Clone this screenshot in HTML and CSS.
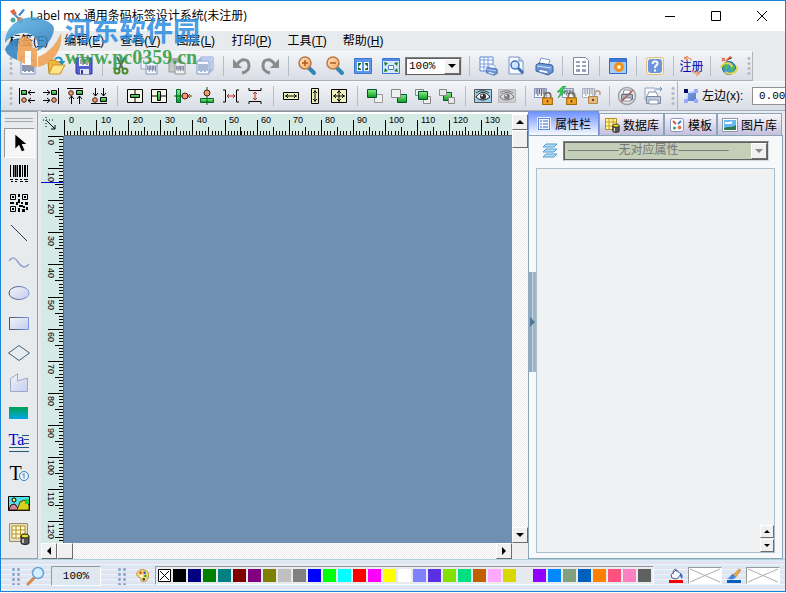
FILE: index.html
```
<!DOCTYPE html>
<html lang="zh-CN">
<head>
<meta charset="utf-8">
<title>Label mx</title>
<link rel="stylesheet" href="styles.css">
</head>
<body>
<svg class="sprite" aria-hidden="true">
  <defs>
    <linearGradient id="gGreen" x1="0" y1="0" x2="0" y2="1"><stop offset="0" stop-color="#8af08a"/><stop offset="1" stop-color="#0a9a1a"/></linearGradient>
    <linearGradient id="gBlue" x1="0" y1="0" x2="1" y2="1"><stop offset="0" stop-color="#eef5ff"/><stop offset="1" stop-color="#6f9be0"/></linearGradient>
    <linearGradient id="gLens" x1="0" y1="0" x2="1" y2="1"><stop offset="0" stop-color="#ffe6c8"/><stop offset="1" stop-color="#f7a860"/></linearGradient>
    <linearGradient id="gLine" x1="0" y1="0" x2="1" y2="0"><stop offset="0" stop-color="#4a5262"/><stop offset="1" stop-color="#7a97e8"/></linearGradient>
    <linearGradient id="gFill" x1="0" y1="0" x2="1" y2="1"><stop offset="0" stop-color="#f2f4f6"/><stop offset="1" stop-color="#c4cdee"/></linearGradient>
    <linearGradient id="gSea" x1="0" y1="0" x2="0" y2="1"><stop offset="0" stop-color="#00a050"/><stop offset="1" stop-color="#00a8e8"/></linearGradient>
    <linearGradient id="gLogo" x1="0" y1="0" x2="1" y2="1"><stop offset="0" stop-color="#58b4e8"/><stop offset="1" stop-color="#2a78b8"/></linearGradient>
  </defs>
  <symbol id="page" viewBox="0 0 20 20"><path d="M3 1h10l4 4v13H3z" fill="#f6f9ff" stroke="#7b93c8"/><path d="M13 1v4h4" fill="#c8d6f2" stroke="#7b93c8"/></symbol>
  <symbol id="code" viewBox="0 0 12 8"><path d="M1 0v6M3 0v8M5 0v6M7 0v8M9 0v6M11 0v8" stroke="#34426e" fill="none"/></symbol>
  <symbol id="printer" viewBox="0 0 20 20"><path d="M5 8l2-6 9 2-2 6z" fill="#fff" stroke="#7a9bd0"/><path d="M2 9l3-2 13 2 1 2v5l-5 3-12-4z" fill="#6b95d8" stroke="#355e9e"/><path d="M3 10l14 2" stroke="#d6e6ff"/><path d="M5 13l9 2v3l-9-2z" fill="#f4f8ff" stroke="#5a82be"/></symbol>
  <symbol id="lock" viewBox="0 0 10 12"><path d="M2 6V3.500a3 3 0 0 1 6 0V6" fill="none" stroke="#7a7260" stroke-width="1.600"/><rect x=".5" y="5.500" width="9" height="6" fill="#f2a42a" stroke="#a8660c"/><path d="M5 7.500v2" stroke="#5a3400" stroke-width="1.500"/></symbol>
  <symbol id="dot" viewBox="0 0 6 6"><circle cx="3" cy="3" r="2.300" fill="#f29a70" stroke="#402010"/></symbol>
  <symbol id="eye" viewBox="0 0 18 14"><path d="M2 8c4-6 10-6 14 0c-5 4-10 4-14 0z" fill="#eef" stroke="#222"/><circle cx="9" cy="7.500" r="3" fill="#333"/><circle cx="8" cy="6.500" r="1" fill="#fff"/><path d="M2 4c4-3 9-3 13 0" stroke="#333" fill="none"/></symbol>
  <symbol id="db" viewBox="0 0 10 12"><path d="M1 3v7c0 2 8 2 8 0V3" fill="#555" stroke="#222"/><ellipse cx="5" cy="3" rx="4" ry="2" fill="#e8e030" stroke="#222"/><path d="M3 6v4" stroke="#ddd" stroke-width="1.500"/></symbol>
  <symbol id="lens" viewBox="0 0 20 20"><path d="M12 12l5 5" stroke="#2f86b8" stroke-width="4" stroke-linecap="round"/><circle cx="8" cy="7" r="6" fill="url(#gLens)" stroke="#b87848" stroke-width="1.500"/></symbol>
</svg>

<div class="window">
  <header class="titlebar">
    <svg class="app-icon" viewBox="0 0 16 16"><path d="M1 3l4-2 3 5-4 1z" fill="#e06840"/><path d="M9 7l5-6 2 1-5 6z" fill="#3b86d0"/><circle cx="4" cy="12" r="2.500" fill="#48a8a0"/><circle cx="11" cy="12" r="3" fill="#e88850"/><path d="M5 6l5 5" stroke="#6488b0" stroke-width="2"/></svg>
    <h1>Label mx 通用条码标签设计系统(未注册)</h1>
    <div class="win-controls">
      <button aria-label="最小化"><svg viewBox="0 0 12 12"><path d="M1 6.500h10" stroke="#000"/></svg></button>
      <button aria-label="最大化"><svg viewBox="0 0 12 12"><path d="M1.500 1.500h9v9h-9z" fill="none" stroke="#000"/></svg></button>
      <button aria-label="关闭"><svg viewBox="0 0 12 12"><path d="M1 1l10 10M11 1L1 11" stroke="#000" fill="none"/></svg></button>
    </div>
  </header>

  <nav class="menubar">
    <button>标签(<u>F</u>)</button><button>编辑(<u>E</u>)</button><button>查看(<u>V</u>)</button><button>图层(<u>L</u>)</button><button>打印(<u>P</u>)</button><button>工具(<u>T</u>)</button><button>帮助(<u>H</u>)</button>
  </nav>

  <div class="row">
    <div class="toolbar main-tools">
      <span class="grip"></span>
      <div class="group">
        <button aria-label="新建"><svg viewBox="0 0 20 20"><use href="#page"/><path d="M5 9v6M7 9v7M9 9v6M11 9v7M13 9v6M15 9v7" stroke="#25335f"/></svg></button>
        <button aria-label="打开"><svg viewBox="0 0 20 20"><path d="M2 6l2-2h5l2 2h4v11H3z" fill="#f0b83c" stroke="#b98218"/><path d="M3 18l4-9h12l-5 9z" fill="#ffe48a" stroke="#c8962a"/><path d="M9 3c4-3 7-1 7 3" fill="none" stroke="#1f8fc8" stroke-width="2"/><path d="M12.500 5h7L16 9z" fill="#1f8fc8"/></svg></button>
        <button aria-label="保存"><svg viewBox="0 0 20 20"><path d="M2 2h16v16H3l-1-1z" fill="#5560d0" stroke="#3038a0"/><path d="M5 2h10v8H5z" fill="#f4f6ff"/><path d="M7 3v5M9 3v6M11 3v5M13 3v6" stroke="#555"/><path d="M6 13h9v5H6z" fill="#e4e4f4"/><path d="M8 14v4" stroke="#3038a0" stroke-width="2"/></svg></button>
      </div>
      <div class="group">
        <button aria-label="剪切"><svg viewBox="0 0 20 20"><path d="M6 1l6 12M14 1L8 13" stroke="#5b6b50" stroke-width="2"/><circle cx="6" cy="15" r="2.500" fill="none" stroke="#4a8a2a" stroke-width="2"/><circle cx="14" cy="15" r="2.500" fill="none" stroke="#4a8a2a" stroke-width="2"/></svg></button>
        <button aria-label="复制"><svg viewBox="0 0 20 20"><path d="M2 2h9v11H2z" fill="#eef3fb" stroke="#8fa4c8"/><path d="M7 6h9l2 2v10H7z" fill="#f6f9ff" stroke="#8196c4"/><use href="#code" x="8" y="9" width="9" height="7"/></svg></button>
        <button aria-label="粘贴"><svg viewBox="0 0 20 20"><path d="M2 4h12v12H2z" fill="#c8c8c8" stroke="#999"/><path d="M5 2h6v3H5z" fill="#aaa"/><path d="M8 6h8l2 2v10H8z" fill="#f2f2f2" stroke="#909090"/><use href="#code" x="9" y="9" width="8" height="7"/></svg></button>
        <button aria-label="副本"><svg viewBox="0 0 20 20"><path d="M6 1h12v13H6zM4 3h12v13H4z" fill="#e6edfa" stroke="#94a8d8"/><path d="M2 5h12v13H2z" fill="#f6f9ff" stroke="#7f97cc"/><path d="M4 8v7M6 8v8M8 8v7M10 8v8M12 8v7" stroke="#6078b0"/></svg></button>
      </div>
      <div class="group">
        <button aria-label="撤销"><svg viewBox="0 0 20 20"><path d="M5 9c4-7 12-7 12 1c0 4-3 6-7 7" fill="none" stroke="#8b8b8b" stroke-width="3"/><path d="M1 3v9h9z" fill="#8b8b8b"/></svg></button>
        <button aria-label="重做"><svg viewBox="0 0 20 20"><path d="M15 9c-4-7-12-7-12 1c0 4 3 6 7 7" fill="none" stroke="#8b8b8b" stroke-width="3"/><path d="M19 3v9h-9z" fill="#8b8b8b"/></svg></button>
      </div>
      <div class="group">
        <button aria-label="放大"><svg viewBox="0 0 20 20"><use href="#lens"/><path d="M5 7h6M8 4v6" stroke="#b05a20" stroke-width="1.500"/></svg></button>
        <button aria-label="缩小"><svg viewBox="0 0 20 20"><use href="#lens"/><path d="M5 7h6" stroke="#b05a20" stroke-width="1.500"/></svg></button>
        <button aria-label="适合页面"><svg viewBox="0 0 20 20"><path d="M1.500 2.500h17v15h-17z" fill="#5f95ea" stroke="#3f74d0"/><path d="M4 6h5v9H4zM11 6h5v9h-5z" fill="#f4f8ff"/><path d="M5 7h3v1l-3 3zM12 7h3v4l-3-3zM5 11l3 2v1H5zM15 11v3h-3v-1z" fill="#16701e"/></svg></button>
        <button aria-label="适合选择"><svg viewBox="0 0 20 20"><path d="M1.500 2.500h17v15h-17z" fill="#d8e8ff" stroke="#3f74d0"/><path d="M2 3h16v2H2z" fill="#4f88e4"/><path d="M7.500 9.500h5v4h-5z" fill="#fff" stroke="#4b7cd0"/><path d="M3 6l4 1-3 3zM17 6l-4 1 3 3zM3 16l4-1-3-3zM17 16l-4-1 3-3z" fill="#16801e"/></svg></button>
        <span class="combo zoom-combo">
          <select aria-label="显示比例"><option>100%</option></select>
          <span class="arrow"></span>
        </span>
      </div>
      <div class="group">
        <button aria-label="打印数据"><svg viewBox="0 0 20 20"><path d="M2 1h13v14H2z" fill="#fff" stroke="#5f87d4"/><path d="M2 4h13M2 8h13M2 11h13M6 1v14M10 1v14" stroke="#7b9ee0"/><use href="#printer" x="7" y="7" width="13" height="13"/></svg></button>
        <button aria-label="打印预览"><svg viewBox="0 0 20 20"><use href="#page"/><path d="M12 12l5 5" stroke="#3d6fb4" stroke-width="3"/><circle cx="9" cy="9" r="4" fill="#cfe6ff" stroke="#3d72be" stroke-width="1.500"/></svg></button>
        <button aria-label="打印"><svg viewBox="0 0 20 20"><use href="#printer"/></svg></button>
      </div>
      <div class="group"><button aria-label="表格"><svg viewBox="0 0 20 20"><path d="M2.500 1.500h12l3 3v14h-15z" fill="#fff" stroke="#8088a0"/><path d="M5 5h4v2H5zM11 5h4v2h-4zM5 9h4v2H5zM11 9h4v2h-4zM5 13h4v3H5zM11 13h4v3h-4z" fill="#99a2bc"/></svg></button></div>
      <div class="group"><button aria-label="选项"><svg viewBox="0 0 20 20"><path d="M1.500 2.500h17v15h-17z" fill="#a8ccf4" stroke="#2f6ac8"/><path d="M2 3h16v3H2z" fill="#3f78d8"/><circle cx="11" cy="11" r="3.500" fill="#fff0c0" stroke="#f09018" stroke-width="3"/></svg></button></div>
      <div class="group"><button aria-label="帮助主题"><svg viewBox="0 0 20 20"><rect x="1.500" y="1.500" width="17" height="17" rx="2" fill="#fff4d0" stroke="#d8c088"/><rect x="3" y="3" width="14" height="14" rx="3" fill="#6c94dc"/><path d="M7.500 8c0-4 6-3 5 0c-1 2-2.500 1-2.500 4M10 13.500v2" fill="none" stroke="#fff" stroke-width="2"/></svg></button></div>
      <div class="group"><button class="register">注册<svg viewBox="0 0 24 20"><path d="M8 4l-4-2 4-2M4 2h5c2 0 2 1 2 3M16 15l4 2-4 3M20 17h-5c-2 0-2-1-2-2" fill="none" stroke="#f07840"/></svg></button></div>
      <div class="group"><button aria-label="网站"><svg viewBox="0 0 20 20"><path d="M3 2l3 3M6 2L3 5M7 5l4-4 2 1" stroke="#e06848" stroke-width="1.500"/><circle cx="10" cy="12" r="6.500" fill="#3f9cc8" stroke="#286080"/><path d="M5 9c3-2 5 0 4 3s-3 2-4-3zM12 8l4 3-2 5-3-4z" fill="#58b848"/><path d="M2 12c1-6 10-6 11-1M18 10c1 8-8 9-12 6" fill="none" stroke="#e0d850" stroke-width="2"/></svg></button></div>
      <span class="grip"></span>
    </div>
  </div>

  <div class="row">
    <div class="toolbar align-tools">
      <span class="grip"></span>
      <div class="group">
        <button aria-label="左对齐"><svg viewBox="0 0 20 20"><path d="M2.500 2v16M11 6.500h7M14 4l-3 2.500 3 2.500M11 14.500h7M14 12l-3 2.500 3 2.500" stroke="#000" fill="none"/><path d="M4.500 4.500h5v4h-5z" fill="url(#gGreen)" stroke="#000"/><use href="#dot" x="4" y="11" width="6" height="6"/></svg></button>
        <button aria-label="右对齐"><svg viewBox="0 0 20 20"><path d="M17.500 2v16M2 6.500h7M6 4l3 2.500L6 9M2 14.500h7M6 12l3 2.500L6 17" stroke="#000" fill="none"/><path d="M10.500 4.500h5v4h-5z" fill="url(#gGreen)" stroke="#000"/><use href="#dot" x="10" y="11" width="6" height="6"/></svg></button>
        <button aria-label="顶对齐"><svg viewBox="0 0 20 20"><path d="M2 2.500h16M6.500 10v8M4 13l2.500-3L9 13M14.500 10v8M12 13l2.500-3 2.500 3" stroke="#000" fill="none"/><path d="M11.500 4.500h6v4h-6z" fill="url(#gGreen)" stroke="#000"/><use href="#dot" x="3" y="4" width="6" height="6"/></svg></button>
        <button aria-label="底对齐"><svg viewBox="0 0 20 20"><path d="M2 17.500h16M6.500 2v8M4 7l2.500 3L9 7M14.500 2v8M12 7l2.500 3L17 7" stroke="#000" fill="none"/><path d="M11.500 11.500h6v4h-6z" fill="url(#gGreen)" stroke="#000"/><use href="#dot" x="3" y="11" width="6" height="6"/></svg></button>
      </div>
      <div class="group">
        <button aria-label="垂直居中"><svg viewBox="0 0 20 20"><path d="M2.500 3.500h15v13h-15z" fill="#f4f6e8" stroke="#000"/><path d="M10 4v12" stroke="#000"/><path d="M5.500 8.500h9v3h-9z" fill="url(#gGreen)" stroke="#000"/></svg></button>
        <button aria-label="水平居中"><svg viewBox="0 0 20 20"><path d="M2.500 3.500h15v13h-15z" fill="#f4f6e8" stroke="#000"/><path d="M3 10h14" stroke="#000"/><path d="M8.500 5.500h3v9h-3z" fill="url(#gGreen)" stroke="#000"/></svg></button>
        <button aria-label="水平中线"><svg viewBox="0 0 20 20"><path d="M3.500 3.500h4v13h-4z" fill="url(#gGreen)" stroke="#063"/><path d="M1 10h18" stroke="#060"/><circle cx="12" cy="10" r="3" fill="#f29a70" stroke="#402010"/><path d="M17 8l-2 2 2 2" fill="none" stroke="#c02020"/></svg></button>
        <button aria-label="垂直中线"><svg viewBox="0 0 20 20"><path d="M3.500 12.500h13v4h-13z" fill="url(#gGreen)" stroke="#063"/><path d="M10 1v18" stroke="#060"/><circle cx="10" cy="7" r="3" fill="#f29a70" stroke="#402010"/></svg></button>
        <button aria-label="水平等距"><svg viewBox="0 0 20 20"><path d="M2 4h2.500v12H2M18 4h-2.500v12H18" fill="none" stroke="#000"/><path d="M6 10h8M8 8l-2 2 2 2M12 8l2 2-2 2" fill="none" stroke="#b03020"/></svg></button>
        <button aria-label="垂直等距"><svg viewBox="0 0 20 20"><path d="M4 2v2.500h12V2M4 18v-2.500h12V18" fill="none" stroke="#000"/><path d="M10 6v8M8 8l2-2 2 2M8 12l2 2 2-2" fill="none" stroke="#b03020"/></svg></button>
      </div>
      <div class="group">
        <button aria-label="等宽"><svg viewBox="0 0 20 20"><path d="M2.500 6.500h15v7h-15z" fill="#eef0b8" stroke="#000"/><path d="M4 10h12M7 8l-2 2 2 2M13 8l2 2-2 2" fill="none" stroke="#000"/></svg></button>
        <button aria-label="等高"><svg viewBox="0 0 20 20"><path d="M6.500 2.500h7v15h-7z" fill="#eef0b8" stroke="#000"/><path d="M10 4v12M8 7l2-2 2 2M8 13l2 2 2-2" fill="none" stroke="#000"/></svg></button>
        <button aria-label="等大"><svg viewBox="0 0 20 20"><path d="M2.500 3.500h15v13h-15z" fill="#eef0b8" stroke="#000"/><path d="M4 10h12M10 4v12M7 8l-2 2 2 2M13 8l2 2-2 2M8 7l2-2 2 2M8 13l2 2 2-2" fill="none" stroke="#000"/></svg></button>
      </div>
      <div class="group">
        <button aria-label="置顶"><svg viewBox="0 0 20 20"><path d="M9.500 8.500h8v8h-8z" fill="#f0f0f0" stroke="#999"/><path d="M2.500 3.500h9v8h-9z" fill="url(#gGreen)" stroke="#053"/></svg></button>
        <button aria-label="置底"><svg viewBox="0 0 20 20"><path d="M8.500 8.500h9v8h-9z" fill="url(#gGreen)" stroke="#053"/><path d="M2.500 3.500h9v8h-9z" fill="#f0f0f0" stroke="#888"/></svg></button>
        <button aria-label="上移"><svg viewBox="0 0 20 20"><path d="M2.500 3.500h8v6h-8zM10.500 10.500h7v7h-7z" fill="#f0f0f0" stroke="#888"/><path d="M5.500 5.500h9v8h-9z" fill="url(#gGreen)" stroke="#053"/></svg></button>
        <button aria-label="下移"><svg viewBox="0 0 20 20"><path d="M6.500 6.500h8v8h-8z" fill="url(#gGreen)" stroke="#053"/><path d="M2.500 3.500h7v6h-7zM11.500 11.500h6v6h-6z" fill="#e8e8e8" stroke="#888"/></svg></button>
      </div>
      <div class="group">
        <button aria-label="显示"><svg viewBox="0 0 20 20"><path d="M1.500 3.500h17v13h-17z" fill="#9ad0e8" stroke="#555"/><use href="#eye" x="1" y="3" width="18" height="14"/></svg></button>
        <button aria-label="隐藏"><svg viewBox="0 0 20 20"><path d="M1.500 3.500h17v13h-17z" fill="#ccc" stroke="#bbb"/><use href="#eye" x="1" y="3" width="18" height="14" opacity=".5"/></svg></button>
      </div>
      <div class="group">
        <button aria-label="锁定"><svg viewBox="0 0 20 20"><path d="M1.500 2.500h12v9h-12z" fill="#fff" stroke="#8a98c0"/><use href="#code" x="2" y="3" width="11" height="7"/><use href="#lock" x="9" y="6" width="11" height="13"/></svg></button>
        <button aria-label="快速锁定"><svg viewBox="0 0 20 20"><path d="M5.500 2.500h11v9h-11z" fill="#fff" stroke="#8a98c0"/><use href="#code" x="7" y="3" width="9" height="7"/><path d="M6 0L0 6h4l-3 6 8-7H5l4-5z" fill="#30d050" stroke="#108028" stroke-width=".5"/><use href="#lock" x="9" y="6" width="11" height="13"/></svg></button>
        <button aria-label="解锁"><svg viewBox="0 0 20 20"><path d="M1.500 2.500h12v9h-12z" fill="#fff" stroke="#a8b0c8"/><g opacity=".6"><use href="#code" x="2" y="3" width="11" height="7"/></g><path d="M14 9V7c0-3 5-3 5 0v2" fill="none" stroke="#b0a080" stroke-width="1.500"/><path d="M7.500 10.500h9v7h-9z" fill="#e4b880" stroke="#b08850"/><path d="M12 13v2" stroke="#704010" stroke-width="2"/></svg></button>
      </div>
      <div class="group print-group">
        <button aria-label="禁止打印"><svg viewBox="0 0 20 20"><path d="M6 8l1-4h6l1 4z" fill="#fff" stroke="#808890"/><path d="M4.500 8.500h11v5h-11z" fill="#a8b4c4" stroke="#687080"/><path d="M6 12h8v3H6z" fill="#fff" stroke="#808890"/><circle cx="10" cy="10" r="8.500" fill="none" stroke="#a0a0a0" stroke-width="1.500"/><path d="M4 16L16 4" stroke="#b06060" stroke-width="1.500"/></svg></button>
        <button aria-label="打印到"><svg viewBox="0 0 20 20"><path d="M2 2h10v12H2z" fill="#f4f7fc" stroke="#95a4c4"/><path d="M4 10l2-4h7l2 4" fill="#fff" stroke="#8090a8"/><path d="M3.500 10.500h14v7h-14z" fill="#c0cad8" stroke="#7888a0"/><path d="M6 14h9v4H6z" fill="#fff" stroke="#8898b0"/><path d="M13 3h6M17 1l2 2-2 2" stroke="#6888c0" fill="none"/></svg></button>
      </div>
      <span class="grip"></span>
    </div>
    <form class="toolbar position-tools">
      <svg class="pos-icon" viewBox="0 0 16 16"><path d="M3 3h10v10H3z" fill="url(#gBlue)"/><path d="M5 5h8v8H5z" fill="#3f68c8" opacity=".6"/><path d="M1 1h4v4H1z" fill="#000060"/><path d="M11 1h4v4h-4zM1 11h4v4H1zM11 11h4v4h-4z" fill="#9aa8ff"/></svg>
      <label for="pos-x">左边(x):</label>
      <input id="pos-x" type="text" value="0.00">
    </form>
  </div>

  <main class="workspace">
    <aside class="toolbox">
      <span class="tool-grip"></span>
      <button class="active" aria-label="选择"><svg viewBox="0 0 24 24"><path d="M8 3v15l4-4 3 7 3-1-3-7h5z" fill="#000"/></svg></button>
      <button aria-label="条码"><svg viewBox="0 0 24 24"><path d="M3.500 4v12M6.500 4v12M10.500 4v12M15.500 4v12M20.500 4v12" stroke="#000"/><path d="M8.500 4v12M13 4v12M18 4v12" stroke="#000" stroke-width="2"/><path d="M3 18.500h3M8 18.500h3M13 18.500h2M17 18.500h4M4 20.500h2M8 20.500h2M13 20.500h3M18 20.500h3" stroke="#000"/></svg></button>
      <button aria-label="二维码"><svg viewBox="0 0 24 24"><path d="M3.500 3.500h5v5h-5zM15.500 3.500h5v5h-5zM3.500 15.500h5v5h-5z" fill="none" stroke="#000"/><path d="M5 5h2v2H5zM17 5h2v2h-2zM5 17h2v2H5zM11 3h2v3h-2zM11 8h2v4h-2zM3 11h4v2H3zM9 11h2v3H9zM14 11h2v2h-2zM18 11h3v3h-3zM12 14h4v2h-4zM11 17h2v4h-2zM15 18h3v3h-3zM19 16h2v3h-2zM16 15h2v2h-2z" fill="#000"/></svg></button>
      <button aria-label="直线"><svg viewBox="0 0 24 24"><path d="M4 4l16 16" stroke="#303a68"/></svg></button>
      <button aria-label="曲线"><svg viewBox="0 0 24 24"><path d="M2 10c3-4 6-4 9 1s7 7 11 2" fill="none" stroke="#9aa6cc" stroke-width="1.500"/></svg></button>
      <button aria-label="椭圆"><svg viewBox="0 0 24 24"><ellipse cx="12" cy="12" rx="10" ry="6.500" fill="url(#gFill)" stroke="url(#gLine)"/></svg></button>
      <button aria-label="矩形"><svg viewBox="0 0 24 24"><path d="M2.500 6.500h19v12h-19z" fill="url(#gFill)" stroke="url(#gLine)"/></svg></button>
      <button aria-label="菱形"><svg viewBox="0 0 24 24"><path d="M1.500 12L12 4.500 22.500 12 12 19.500z" fill="#e4ecf2" stroke="#4a6074"/></svg></button>
      <button aria-label="多边形"><svg viewBox="0 0 24 24"><path d="M3.500 20.500v-13L10.500 3v7L20.500 7v13.500z" fill="url(#gFill)" stroke="#9ba8cc"/></svg></button>
      <button aria-label="渐变"><svg viewBox="0 0 24 24"><path d="M2 6h19v12H2z" fill="url(#gSea)"/></svg></button>
      <button class="glyph-tool text-tool" aria-label="文本"><span>Ta</span><svg viewBox="0 0 24 24"><path d="M15 4.500h7M17 8.500h5M17 12.500h5M2 16.500h20M2 20.500h20" stroke="#245878"/></svg></button>
      <button class="glyph-tool title-tool" aria-label="序号文本"><span>T</span><svg viewBox="0 0 24 24"><circle cx="17" cy="15" r="4.500" fill="#eaf4fc" stroke="#3a80b0"/><path d="M17 12.500v5M15.500 14l1.500-1.500" stroke="#3a80b0"/></svg></button>
      <button aria-label="图片"><svg viewBox="0 0 24 24"><path d="M1.500 5.500h21v14h-21z" fill="#50e0f0" stroke="#000"/><circle cx="7" cy="9" r="2" fill="#fff060" stroke="#000"/><path d="M2 18l2-4 4-1 4 6H2z" fill="#d08898" stroke="#301010"/><path d="M10 19l3-8 4-2 5 5v5z" fill="#d8d020" stroke="#404000"/><path d="M18 8h4v5h-4z" fill="#18d050"/></svg></button>
      <button aria-label="数据库表"><svg viewBox="0 0 24 24"><path d="M2.500 2.500h18v18h-18z" fill="#e8dcc0" stroke="#9a9070"/><path d="M5 5h13v12H5z" fill="#fffbe0" stroke="#b09020"/><path d="M9 5v12M13.500 5v12M5 9h13M5 13h13" stroke="#b09020"/><use href="#db" x="13" y="12" width="10" height="12"/></svg></button>
    </aside>

    <section class="editor">
      <div class="corner"><svg viewBox="0 0 22 22"><path d="M5 3v12M2 6h12" stroke="#000" stroke-dasharray="1 2"/><path d="M6 7l8 8M14 11v4h-4" fill="none" stroke="#000"/></svg></div>
      <div class="ruler-x">
        <svg preserveAspectRatio="none"><g stroke="#000"><path d="M0 19h446" stroke-width="4" stroke-dasharray="1 2.210"/><path d="M16 17h430" stroke-width="8" stroke-dasharray="1 31.100"/><path d="M0 13.500h446" stroke-width="15" stroke-dasharray="1 31.100"/></g></svg>
        <ol><li>0</li><li>10</li><li>20</li><li>30</li><li>40</li><li>50</li><li>60</li><li>70</li><li>80</li><li>90</li><li>100</li><li>110</li><li>120</li><li>130</li></ol>
      </div>
      <div class="ruler-y">
        <svg preserveAspectRatio="none"><g stroke="#000"><path d="M20 0v408" stroke-width="4" stroke-dasharray="1 2.210"/><path d="M18 16v392" stroke-width="8" stroke-dasharray="1 31.100"/><path d="M14.500 0v408" stroke-width="15" stroke-dasharray="1 31.100"/></g><path d="M0 46.500h22" stroke="#0000d0"/></svg>
        <ol><li>0</li><li>10</li><li>20</li><li>30</li><li>40</li><li>50</li><li>60</li><li>70</li><li>80</li><li>90</li><li>100</li><li>110</li><li>120</li></ol>
      </div>
      <div class="canvas"></div>
      <div class="scroll-y"><button class="bevel up" aria-label="向上"></button><span class="bevel"></span><button class="bevel down" aria-label="向下"></button></div>
      <div class="scroll-x"><button class="bevel left" aria-label="向左"></button><span class="bevel"></span><button class="bevel right" aria-label="向右"></button></div>
      <div class="size-corner"></div>
    </section>

    <section class="panel">
      <div class="tabs" role="tablist">
        <button role="tab" aria-selected="true"><svg viewBox="0 0 16 16"><path d="M1.500 1.500h13v13h-13z" fill="#5b8ae0" stroke="#e8f0ff"/><path d="M3 3h10v10H3z" fill="#f2f7ff"/><path d="M4 5h2M7 5h5M4 8h2M7 8h5M4 11h2M7 11h5" stroke="#3a68c0"/></svg>属性栏</button>
        <button role="tab"><svg viewBox="0 0 16 16"><path d="M1.500 1.500h11v11h-11z" fill="#fff6a0" stroke="#b09020"/><path d="M5 2v10M9 2v10M2 5h10M2 9h10" stroke="#c8a020"/><use href="#db" x="8" y="6" width="8" height="10"/></svg>数据库</button>
        <button role="tab"><svg viewBox="0 0 16 16"><rect x="1.500" y="1.500" width="13" height="13" rx="2" fill="#fff" stroke="#8898c0"/><path d="M4 4l3 3" stroke="#e05840" stroke-width="2"/><path d="M9 7l3-3" stroke="#4080d0" stroke-width="2"/><circle cx="5.500" cy="11" r="1.500" fill="#30a070"/><circle cx="10.500" cy="10.500" r="2" fill="#e07858"/></svg>模板</button>
        <button role="tab"><svg viewBox="0 0 16 16"><path d="M.5 1.500h15v13H.5z" fill="#fff" stroke="#8898a8"/><path d="M2 3h12v10H2z" fill="#68b8f0"/><path d="M3 6h5l2-1" stroke="#fff" stroke-width="2"/><path d="M2 13v-2c5-2 8 0 12-3v5z" fill="#307850"/></svg>图片库</button>
      </div>
      <div class="panel-body">
        <div class="object-row">
          <svg viewBox="0 0 16 16"><path d="M4 1h11l-3 3H1zM4 6h11l-3 3H1zM4 11h11l-3 3H1z" fill="#b8dcf4" stroke="#4f9ad0"/></svg>
          <span class="combo object-combo">
            <select aria-label="对象" disabled><option>───────无对应属性───────</option></select>
            <span class="arrow"></span>
          </span>
        </div>
        <div class="properties">
          <div class="spin"><button class="bevel up" aria-label="上一个"></button><button class="bevel down" aria-label="下一个"></button></div>
        </div>
      </div>
      <button class="splitter" aria-label="折叠面板"></button>
    </section>
  </main>

  <footer class="statusbar">
    <span class="dots"></span>
    <svg class="status-icon" viewBox="0 0 20 20"><path d="M8 12l-6 6" stroke="#d88848" stroke-width="3" stroke-linecap="round"/><circle cx="12" cy="7" r="5.500" fill="#d4f0ff" stroke="#6aa0d8" stroke-width="1.500"/></svg>
    <output class="zoom-value">100%</output>
    <span class="dots"></span>
    <svg class="status-icon palette-icon" viewBox="0 0 20 20"><path d="M4 4c4-4 13-2 13 5c0 6-4 9-8 8c-3-1 0-4-3-5S0 8 4 4z" fill="#f8d878" stroke="#b08020"/><circle cx="7" cy="6" r="1.500" fill="#e03020"/><circle cx="12" cy="6" r="1.500" fill="#2050d0"/><circle cx="8" cy="10" r="1.500" fill="#fff"/><circle cx="13" cy="10" r="1.500" fill="#20a040"/><circle cx="11" cy="14" r="1.500" fill="#333"/></svg>
    <div class="swatches">
      <button class="none" aria-label="无颜色"><svg viewBox="0 0 13 13"><path d="M.5.5h12v12H.5zM2 2l9 9M11 2l-9 9" fill="#fff" stroke="#000"/></svg></button>
      <button style="background:#000000"></button><button style="background:#000080"></button><button style="background:#008000"></button><button style="background:#008080"></button><button style="background:#800000"></button><button style="background:#800080"></button><button style="background:#808000"></button><button style="background:#c0c0c0"></button><button style="background:#808080"></button><button style="background:#0000ff"></button><button style="background:#00ff00"></button><button style="background:#00ffff"></button><button style="background:#ff0000"></button><button style="background:#ff00ff"></button><button style="background:#ffff00"></button><button style="background:#ffffff"></button><button style="background:#8080ff"></button><button style="background:#5a30e0"></button><button style="background:#84e000"></button><button style="background:#00e080"></button><button style="background:#c06000"></button><button style="background:#ffa8ff"></button><button style="background:#d8d800"></button><button style="background:#e6eaee"></button><button style="background:#9000ff"></button><button style="background:#0088ff"></button><button style="background:#80a080"></button><button style="background:#0060c0"></button><button style="background:#ff8000"></button><button style="background:#ff5080"></button><button style="background:#ff80c0"></button><button style="background:#606060"></button>
    </div>
    <div class="current">
      <svg viewBox="0 0 16 16"><path d="M1 12h14v3H1z" fill="#f00000"/><path d="M3 7l5-5 5 4-4 5-5-1z" fill="#f8fbff" stroke="#506080"/><path d="M5 6c0-6 4-6 4-2" fill="none" stroke="#506080"/><path d="M12 5c3 1 3 4 2 6l-2-3z" fill="#3868b8"/></svg>
      <button class="no-color" aria-label="填充颜色"><svg viewBox="0 0 32 16" preserveAspectRatio="none"><path d="M1 1l30 14M31 1L1 15" stroke="#aaa"/></svg></button>
      <svg viewBox="0 0 16 16"><path d="M1 12h14v3H1z" fill="#0060c0"/><path d="M7 7l6-6 2 1-5 7z" fill="#f0a840" stroke="#a87020" stroke-width=".5"/><path d="M1 10c4 0 3-4 6-4l3 3c-2 3-6 3-9 1z" fill="#4888d8"/></svg>
      <button class="no-color" aria-label="线条颜色"><svg viewBox="0 0 32 16" preserveAspectRatio="none"><path d="M1 1l30 14M31 1L1 15" stroke="#aaa"/></svg></button>
    </div>
  </footer>
</div>

<div class="watermark" aria-hidden="true">
  <svg viewBox="0 0 58 56"><path d="M1 30C1 10 22 0 38 6C46 9 50 12 50 16C49 26 42 34 33 38C36 30 32 22 23 20C14 19 7 23 1 30z" fill="url(#gLogo)"/><path d="M1 36C4 30 9 26 15 25L13 47C6 44 2 41 1 36z" fill="#2a80c0"/><path d="M57 20C59 36 50 50 34 54V44C44 40 52 32 57 20z" fill="#f0a050"/><path d="M15 25C24 22 30 27 28 34L33 36V54L26 53V38H21V51L13 47z" fill="#f0a050"/><path d="M21 38h6v14l-6-1z" fill="#fff"/></svg>
  <div><strong>河东软件园</strong><em>www.pc0359.cn</em></div>
</div>
</body>
</html>
```

FILE: styles.css
```
:root {
  --face: #e7ebee;
  --line: #8aa5b5;
  --cjk: "Noto Sans CJK SC", sans-serif;
}

* { box-sizing: border-box; }

body {
  margin: 0;
  height: 100vh;
  background: #fff;
  color: #000;
  font: 12px/16px "Open Sans", var(--cjk);
  overflow: hidden;
}

button, select, input {
  font: inherit;
  color: inherit;
  margin: 0;
  padding: 0;
  border: 0;
  border-radius: 0;
  background: none;
}

svg { display: block; }
.sprite { position: absolute; width: 0; height: 0; }

.window {
  display: flex;
  flex-direction: column;
  height: calc(100vh - 1px);
  border: 1px solid #1883d7;
  background: var(--face);
}

/* Title and menu */
.titlebar {
  display: flex;
  align-items: center;
  flex: 0 0 30px;
  padding-left: 8px;
  background: #fff;
}
.app-icon { width: 16px; height: 16px; margin-right: 5px; }
.titlebar h1 { margin: 0; font-size: 12px; font-weight: 400; }
.win-controls { display: flex; margin-left: auto; }
.win-controls button { display: grid; place-items: center; width: 46px; height: 28px; }
.win-controls svg { width: 12px; height: 12px; }

.menubar {
  display: flex;
  gap: 16px;
  flex: 0 0 20px;
  padding-left: 8px;
  font-family: "Liberation Sans", var(--cjk);
}
.menubar button { white-space: nowrap; min-width: 39px; text-align: left; }

/* Toolbars */
.row { display: flex; flex: 0 0 30px; overflow: hidden; }
.toolbar {
  display: flex;
  align-items: center;
  flex: none;
  border-top: 1px solid #fafafa;
  border-bottom: 1px solid #a4b0bc;
  border-right: 1px solid #b0b6be;
  background: linear-gradient(#f2f4f7, #d9dde5);
}
.grip {
  flex: none;
  width: 4px;
  height: 20px;
  margin: 0 1px 0 8px;
  background: radial-gradient(circle, #b4b9c2 1px, transparent 2px) 0 0 / 4px 5px;
}
.group { display: flex; align-items: center; flex: none; }
.group + .group { border-left: 1px solid #b4bcc6; height: 20px; }
.group button { display: grid; place-items: center; flex: none; height: 24px; }
.group svg { width: 20px; height: 20px; }

.main-tools .group { gap: 1px; padding-right: 5px; }
.main-tools .group + .group { padding-left: 4px; }
.main-tools .group button { width: 27px; }
.main-tools .grip:last-child { margin: 0 1px 0 0; }

.align-tools .group { padding-right: 6px; }
.align-tools .group + .group { padding-left: 5px; }
.align-tools .group button { width: 24px; }
.align-tools .grip:first-child { margin-right: 2px; }
.align-tools .print-group { gap: 2px; }
.align-tools .grip:last-child { margin: 0 2px 0 0; }

.main-tools .register { position: relative; color: #0000b0; white-space: nowrap; font-family: var(--cjk); }
.register svg { position: absolute; inset: 2px; width: 24px; height: 20px; }

.combo {
  position: relative;
  display: flex;
  border: 1px solid #808080;
  border-right-color: #d8d8d8;
  border-bottom-color: #d8d8d8;
}
.combo select { appearance: none; width: 100%; outline: 1px solid #606060; outline-offset: -1px; }
.combo .arrow {
  position: absolute;
  inset: 1px 1px 1px auto;
  display: grid;
  place-items: center;
  width: 16px;
  border: 1px solid #fff;
  border-right-color: #707070;
  border-bottom-color: #707070;
  background: #f0f0f0;
  pointer-events: none;
}
.combo .arrow::before { content: ""; border: 4px solid transparent; border-top-color: #000; border-bottom: 0; }
.zoom-combo { width: 57px; height: 19px; margin-right: 2px; }
.zoom-combo select { padding-left: 3px; background: #fff; font: 11px/15px "Liberation Mono", monospace; }

.position-tools { flex: 1 0 auto; border-right: 0; padding-left: 5px; }
.pos-icon { width: 16px; height: 16px; margin-right: 3px; }
.position-tools label { width: 50px; font-family: "Liberation Sans", var(--cjk); white-space: nowrap; }
.position-tools input {
  width: 48px;
  height: 18px;
  padding-left: 6px;
  border: 1px solid #909090;
  background: #fff;
  font: 11px/16px "Liberation Mono", monospace;
}

/* Workspace */
.workspace {
  display: grid;
  grid-template: minmax(0, 1fr) / 37px minmax(0, 1fr) 257px;
  flex: 1;
  min-height: 0;
  border-bottom: 1px solid #b0cede;
}

.toolbox {
  display: flex;
  flex-direction: column;
  align-items: center;
  border: 1px solid #9aa0a8;
  border-width: 1px 1px 1px 0;
  background: var(--face);
  min-height: 0;
}
.tool-grip { flex: none; width: 28px; height: 4px; margin: 6px 0 6px; border: 1px solid #a8a8a8; border-width: 1px 0; }
.toolbox button { display: grid; place-items: center; flex: none; width: 31px; height: 30px; }
.toolbox svg { width: 24px; height: 24px; }
.toolbox .active { border: 1px solid #999; border-right-color: #fff; border-bottom-color: #fff; background: #f6f6f6; }
.toolbox .active svg { width: 22px; }
.glyph-tool > * { grid-area: 1 / 1; }
.glyph-tool span { font-family: "Liberation Serif", serif; justify-self: start; }
.text-tool span { margin-left: 5px; padding-bottom: 7px; color: #0000d0; font-size: 16px; }
.title-tool span { margin-left: 6px; font-size: 20px; }

.editor {
  display: grid;
  grid-template: 22px minmax(0, 1fr) 16px / 23px minmax(0, 1fr) 16px;
  min-height: 0;
  margin-left: 3px;
  padding-top: 2px;
  border-top: 1px solid #909090;
  background: #fff;
  font: 9px/10px "Liberation Sans", sans-serif;
}
.corner, .ruler-x, .ruler-y { background: #d5e9e5; overflow: hidden; }
.corner svg { width: 22px; height: 22px; }
.ruler-x, .ruler-y { display: grid; grid-template: minmax(0, 1fr) / minmax(0, 1fr); min-height: 0; }
.ruler-x > *, .ruler-y > * { grid-area: 1 / 1; }
.ruler-x svg, .ruler-y svg { width: 100%; height: 100%; shape-rendering: crispEdges; overflow: hidden; min-height: 0; }
.ruler-x { border-bottom: 1px solid #666; }
.ruler-y { border-right: 1px solid #666; }
.editor ol { display: flex; margin: 0; padding: 0; list-style: none; overflow: hidden; min-width: 0; min-height: 0; }
.ruler-x ol { padding: 1px 0 0 5px; }
.ruler-x li { flex: 0 0 32px; }
.ruler-y ol { flex-direction: column; padding: 4px 0 0 5px; }
.ruler-y li { flex: 0 0 32px; writing-mode: vertical-rl; align-self: flex-start; }
.canvas { background: #6f8fb3; }

.scroll-x, .scroll-y {
  display: flex;
  background: repeating-conic-gradient(#fff 0 25%, #ececec 0 50%) 0 0 / 2px 2px;
}
.scroll-y { grid-area: 1 / 3 / 3 / 4; flex-direction: column; }
.scroll-x { grid-area: 3 / 1 / 4 / 3; }
.size-corner { background: #efefef; }
.bevel {
  display: grid;
  place-items: center;
  flex: 0 0 16px;
  min-width: 16px;
  border: 1px solid #fff;
  border-right-color: #6c6c6c;
  border-bottom-color: #6c6c6c;
  background: #f0f0f0;
}
.scroll-y .down { margin-top: auto; }
.scroll-x .right { margin-left: auto; }
.scroll-y span { flex-basis: 18px; }
.up::before, .down::before, .left::before, .right::before { content: ""; border: 4px solid transparent; }
.up::before { border-bottom-color: #000; border-top: 0; }
.down::before { border-top-color: #000; border-bottom: 0; }
.left::before { border-right-color: #000; border-left: 0; }
.right::before { border-left-color: #000; border-right: 0; }

/* Property panel */
.panel { position: relative; display: flex; flex-direction: column; min-height: 0; background: var(--face); }
.tabs { display: flex; flex: 0 0 24px; align-items: flex-end; }
.tabs button {
  display: flex;
  align-items: center;
  gap: 3px;
  height: 22px;
  padding: 0 4px;
  border: 1px solid var(--line);
  border-bottom: 0;
  background: linear-gradient(#f7f7fc, #c4c0dc);
  font-family: var(--cjk);
  white-space: nowrap;
}
.tabs svg { width: 16px; height: 16px; }
.tabs [aria-selected] { height: 24px; padding: 0 7px; border-color: #7090e0; background: linear-gradient(#6f93ff, #f7f9fc); }
.panel-body {
  display: flex;
  flex-direction: column;
  flex: 1;
  margin-right: 2px;
  padding: 5px 7px;
  border: 1px solid var(--line);
  background: #f6f8f9;
}
.object-row { display: flex; align-items: center; gap: 5px; padding: 0 6px; }
.object-row > svg { width: 16px; height: 16px; }
.object-combo { flex: 1; height: 20px; }
.object-combo select { padding: 0 17px 0 4px; background: #c4cfb8; color: #777; opacity: 1; font: 12px/16px "Liberation Mono", var(--cjk); }
.object-combo .arrow::before { border-top-color: #888; }
.properties { display: flex; justify-content: flex-end; align-items: flex-end; flex: 1; margin-top: 7px; border: 1px solid #a9bfcc; background: #f0f1f3; }
.spin { display: grid; grid-auto-rows: 13px; gap: 1px; width: 14px; }
.spin .bevel { min-width: 14px; }
.spin .bevel::before { border-width: 3px; }
.spin .up::before { border-top: 0; }
.spin .down::before { border-bottom: 0; }
.splitter {
  position: absolute;
  top: 36%;
  left: 0;
  display: grid;
  place-items: center;
  width: 8px;
  height: 100px;
  background: linear-gradient(90deg, #8fabc2 0 4px, #c4d3df 4px 5px, #9db5c8 5px);
}
.splitter::before { content: ""; border: 5px solid transparent; border-left-color: #4e7698; border-right: 0; }

/* Status bar */
.statusbar {
  display: flex;
  align-items: center;
  flex: 0 0 31px;
  padding-left: 10px;
  background: repeating-linear-gradient(#dceaf5 0 2px, #e2e1f0 2px 4px, #eef2fa 4px 5px);
}
.dots {
  flex: none;
  width: 10px;
  height: 18px;
  background: radial-gradient(circle, #8fa6c8 1px, transparent 2px) 0 0 / 5px 5px;
}
.status-icon { flex: none; width: 20px; height: 20px; margin: 0 5px; }
.zoom-value {
  width: 50px;
  height: 20px;
  margin-right: 16px;
  border: 1px solid #999;
  border-right-color: #fff;
  border-bottom-color: #fff;
  background: #dfe7ef;
  font: 11px/18px "Liberation Mono", monospace;
  text-align: center;
}
.palette-icon { width: 16px; height: 16px; margin: 0 4px 0 8px; }
.swatches {
  display: flex;
  gap: 2px;
  flex: none;
  height: 19px;
  padding: 2px;
  border: 1px solid #999;
  border-right-color: #fff;
  border-bottom-color: #fff;
  background: var(--face);
}
.swatches button { width: 13px; height: 13px; }
.swatches svg { width: 13px; height: 13px; }
.current { display: flex; align-items: center; gap: 4px; margin: 0 5px 0 auto; }
.current > svg { width: 16px; height: 16px; }
.no-color { width: 34px; height: 17px; border: 1px solid #999; border-right-color: #fff; border-bottom-color: #fff; background: #fff; }
.no-color svg { width: 32px; height: 15px; }

/* Site mark laid over the top-left corner */
.watermark {
  position: absolute;
  top: 13px;
  left: 4px;
  display: flex;
  opacity: .85;
  pointer-events: none;
}
.watermark svg { width: 58px; height: 56px; }
.watermark div { display: flex; flex-direction: column; padding-left: 3px; }
.watermark strong { color: #2c8ce0; font: 700 27px/33px var(--cjk); }
.watermark em { color: #2e9a3c; font: 700 20px/22px "Liberation Serif", serif; }
```
